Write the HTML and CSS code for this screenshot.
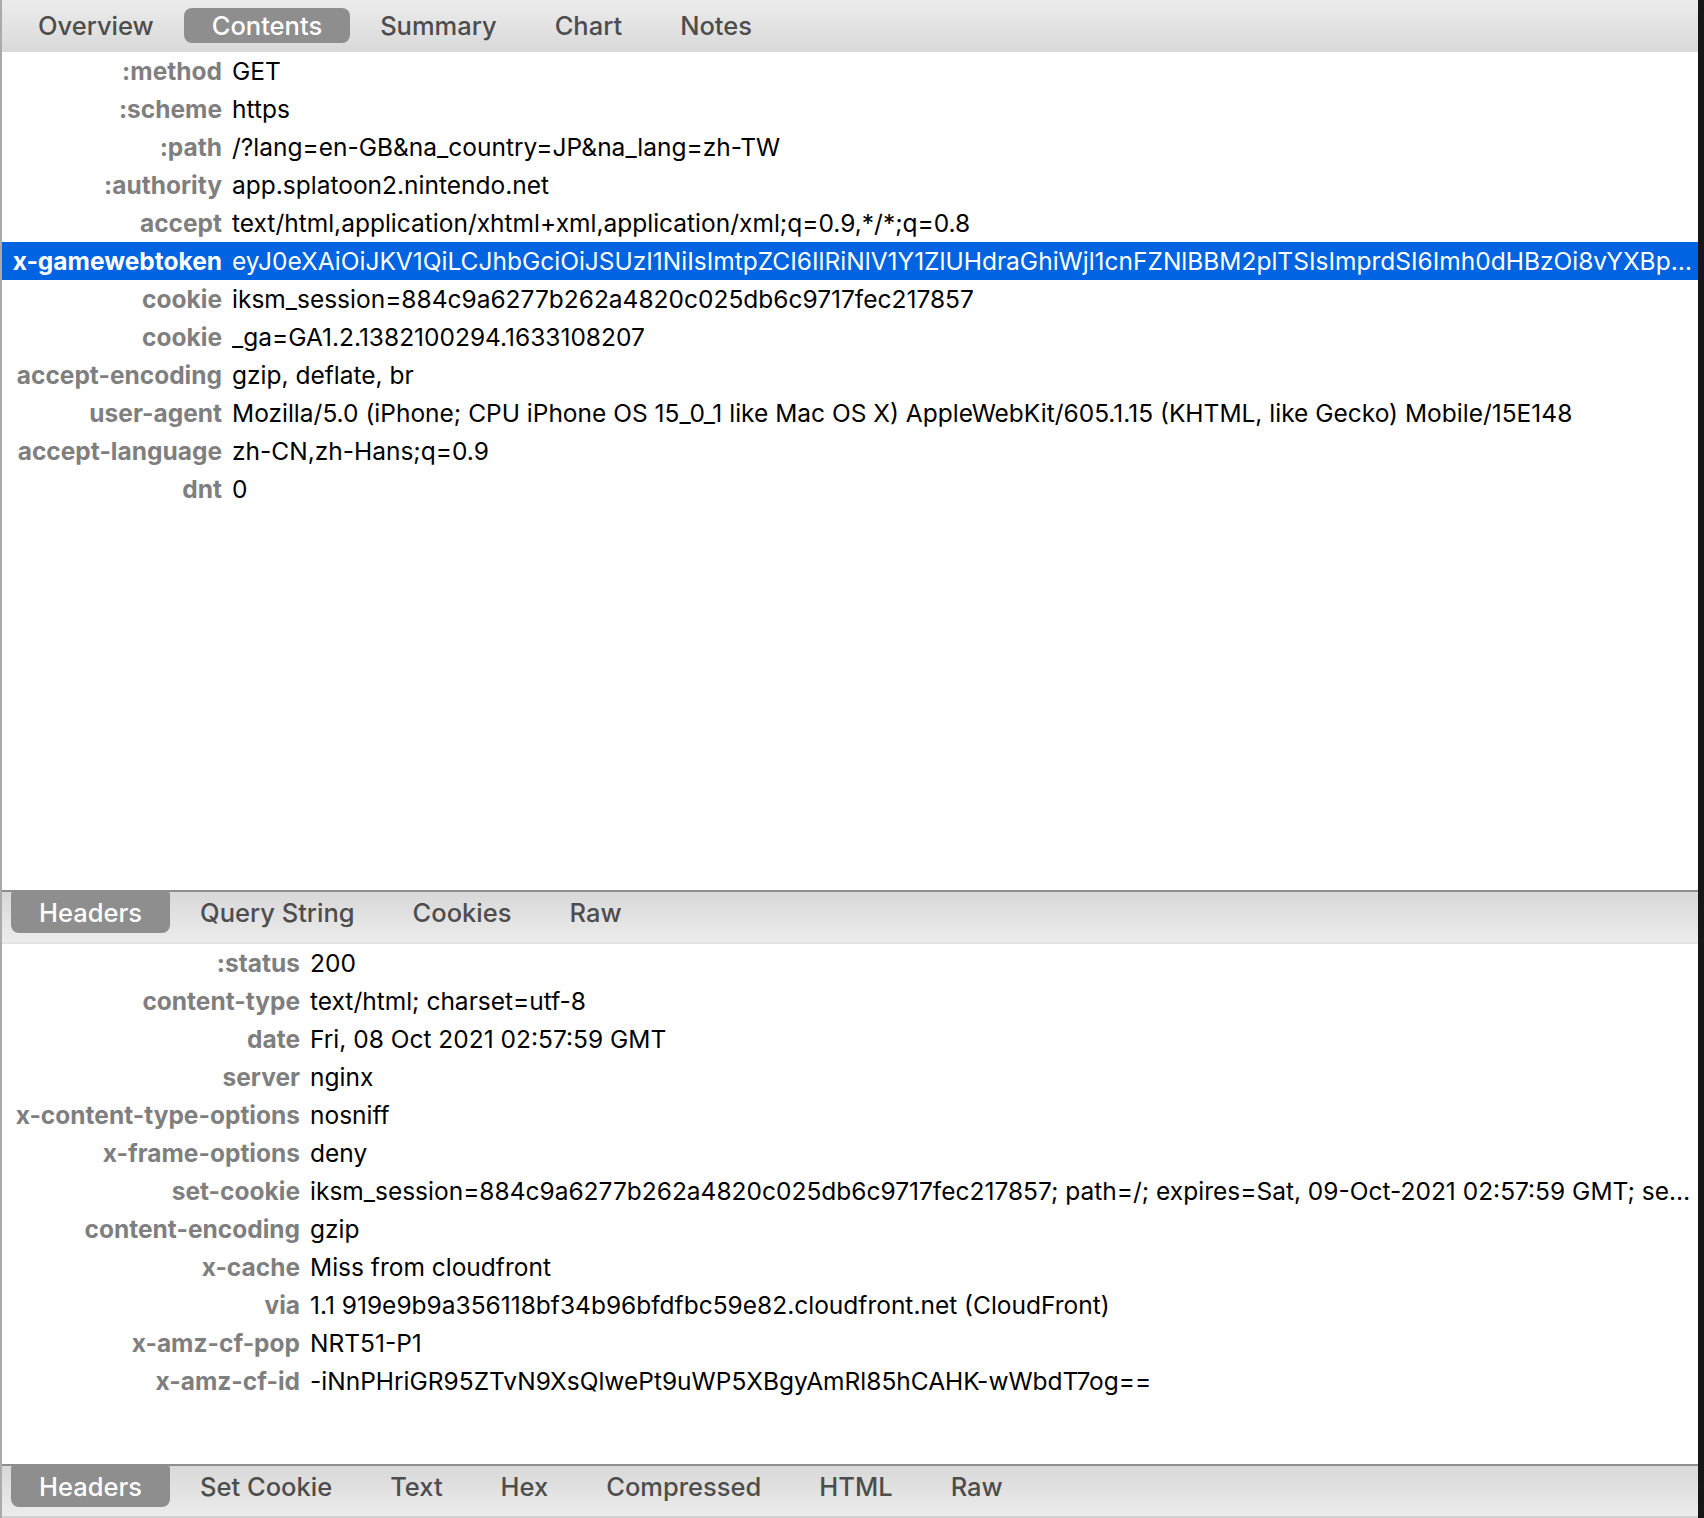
FILE: index.html
```html
<!DOCTYPE html>
<html>
<head>
<meta charset="utf-8">
<link rel="stylesheet" href="styles.css">
</head>
<body>
<div class="window">
  <div class="tabbar top">
    <span class="tab">Overview</span>
    <span class="tab sel">Contents</span>
    <span class="tab">Summary</span>
    <span class="tab">Chart</span>
    <span class="tab">Notes</span>
  </div>
  <div class="pane upper">
    <div class="row"><span class="k">:method</span><span class="v">GET</span></div>
    <div class="row"><span class="k">:scheme</span><span class="v">https</span></div>
    <div class="row"><span class="k">:path</span><span class="v">/?lang=en-GB&amp;na_country=JP&amp;na_lang=zh-TW</span></div>
    <div class="row"><span class="k">:authority</span><span class="v">app.splatoon2.nintendo.net</span></div>
    <div class="row"><span class="k">accept</span><span class="v">text/html,application/xhtml+xml,application/xml;q=0.9,*/*;q=0.8</span></div>
    <div class="row hl"><span class="k">x-gamewebtoken</span><span class="v">eyJ0eXAiOiJKV1QiLCJhbGciOiJSUzI1NiIsImtpZCI6IlRiNlV1Y1ZlUHdraGhiWjl1cnFZNlBBM2plTSIsImprdSI6Imh0dHBzOi8vYXBpLWxwMS56bmMuc3J2Lm5pbnRlbmRvLm5ldC92MS9XZWJTZXJ2aWNlL0NlcnRpZmljYXRlL0xpc3QifQ</span></div>
    <div class="row"><span class="k">cookie</span><span class="v">iksm_session=884c9a6277b262a4820c025db6c9717fec217857</span></div>
    <div class="row"><span class="k">cookie</span><span class="v">_ga=GA1.2.1382100294.1633108207</span></div>
    <div class="row"><span class="k">accept-encoding</span><span class="v">gzip, deflate, br</span></div>
    <div class="row"><span class="k">user-agent</span><span class="v">Mozilla/5.0 (iPhone; CPU iPhone OS 15_0_1 like Mac OS X) AppleWebKit/605.1.15 (KHTML, like Gecko) Mobile/15E148</span></div>
    <div class="row"><span class="k">accept-language</span><span class="v">zh-CN,zh-Hans;q=0.9</span></div>
    <div class="row"><span class="k">dnt</span><span class="v">0</span></div>
  </div>
  <div class="tabbar sub">
    <span class="tab sel">Headers</span>
    <span class="tab">Query String</span>
    <span class="tab">Cookies</span>
    <span class="tab">Raw</span>
  </div>
  <div class="pane lower">
    <div class="row"><span class="k">:status</span><span class="v">200</span></div>
    <div class="row"><span class="k">content-type</span><span class="v">text/html; charset=utf-8</span></div>
    <div class="row"><span class="k">date</span><span class="v">Fri, 08 Oct 2021 02:57:59 GMT</span></div>
    <div class="row"><span class="k">server</span><span class="v">nginx</span></div>
    <div class="row"><span class="k">x-content-type-options</span><span class="v">nosniff</span></div>
    <div class="row"><span class="k">x-frame-options</span><span class="v">deny</span></div>
    <div class="row"><span class="k">set-cookie</span><span class="v">iksm_session=884c9a6277b262a4820c025db6c9717fec217857; path=/; expires=Sat, 09-Oct-2021 02:57:59 GMT; secure; HttpOnly</span></div>
    <div class="row"><span class="k">content-encoding</span><span class="v">gzip</span></div>
    <div class="row"><span class="k">x-cache</span><span class="v">Miss from cloudfront</span></div>
    <div class="row"><span class="k">via</span><span class="v">1.1 919e9b9a356118bf34b96bfdfbc59e82.cloudfront.net (CloudFront)</span></div>
    <div class="row"><span class="k">x-amz-cf-pop</span><span class="v">NRT51-P1</span></div>
    <div class="row"><span class="k">x-amz-cf-id</span><span class="v">-iNnPHriGR95ZTvN9XsQlwePt9uWP5XBgyAmRl85hCAHK-wWbdT7og==</span></div>
  </div>
  <div class="tabbar sub bottom">
    <span class="tab sel">Headers</span>
    <span class="tab">Set Cookie</span>
    <span class="tab">Text</span>
    <span class="tab">Hex</span>
    <span class="tab">Compressed</span>
    <span class="tab">HTML</span>
    <span class="tab">Raw</span>
  </div>
</div>
</body>
</html>
```
FILE: styles.css
```css
html, body {
  margin: 0;
  padding: 0;
  background: #ffffff;
}
.window {
  width: 1704px;
  height: 1518px;
  box-sizing: border-box;
  border-left: 2px solid #aaaaaa;
  border-right: 6px solid #161616;
  display: flex;
  flex-direction: column;
  font-family: Inter, "Noto Sans", sans-serif;
  background: #ffffff;
  overflow: hidden;
}
.tabbar {
  display: flex;
  align-items: flex-start;
  gap: 2px;
  flex: none;
  box-sizing: border-box;
}
.tabbar.top {
  height: 52px;
  padding: 8px 0 0 8px;
  background: linear-gradient(#ececec, #d9d9d9);
}
.tabbar.sub {
  height: 54px;
  padding: 0 0 0 9px;
  border-top: 2px solid #8e8e8e;
  border-bottom: 2px solid #e3e3e3;
  background: linear-gradient(#d8d8d8, #ececec);
}
.tabbar.bottom {
  border-bottom-color: #d3d3d3;
}
.tab {
  font-size: 25.5px;
  font-weight: 500;
  color: #4d4d4d;
  padding: 0 28px;
  height: 35px;
  line-height: 36px;
  white-space: nowrap;
}
.tabbar.sub .tab {
  height: 41px;
  line-height: 42px;
}
.tab.sel {
  background: #8e8e8e;
  color: #ffffff;
  border-radius: 8px;
}
.tabbar.sub .tab.sel {
  border-radius: 2px 2px 8px 8px;
}
.pane {
  display: flex;
  flex-direction: column;
  flex: none;
}
.pane.upper {
  height: 838px;
}
.pane.lower {
  height: 520px;
}
.row {
  display: flex;
  height: 38px;
  line-height: 39px;
  font-size: 24.5px;
  gap: 10px;
  white-space: nowrap;
}
.k {
  flex: none;
  text-align: right;
  font-weight: 700;
  color: #7f7f7f;
}
.upper .k {
  width: 220px;
}
.lower .k {
  width: 298px;
}
.v {
  flex: 1;
  min-width: 0;
  overflow: hidden;
  text-overflow: ellipsis;
  color: #000000;
  padding-right: 4px;
}
.row.hl {
  background: #0063e1;
}
.row.hl .k,
.row.hl .v {
  color: #ffffff;
}
```
